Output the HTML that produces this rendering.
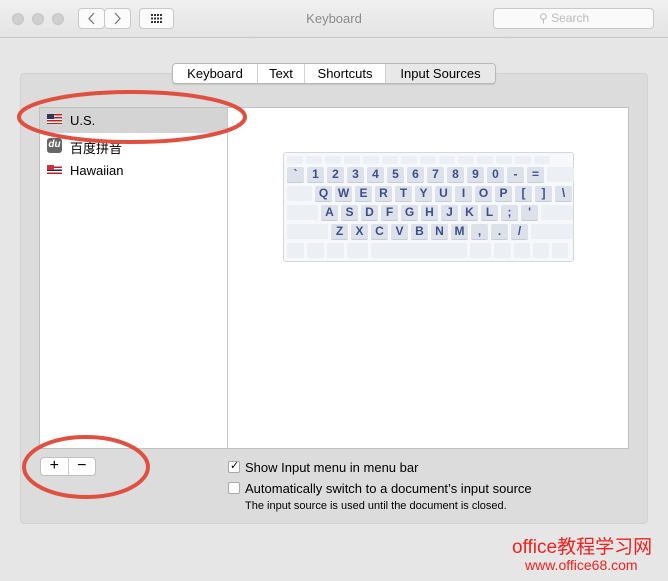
<html><head><style>
body{margin:0;width:668px;height:581px;background:#e6e6e6;font-family:"Liberation Sans",sans-serif;position:relative;overflow:hidden}
.tb{position:absolute;left:0;top:0;width:668px;height:37px;background:linear-gradient(#f0f0f0,#e4e4e4);border-bottom:1px solid #c8c8c8}
.dot{position:absolute;top:13px;width:12px;height:12px;border-radius:50%;background:#d0d0d0;border:1px solid #c4c4c4;box-sizing:border-box}
.btn{position:absolute;top:8px;height:21px;background:#fbfbfb;border:1px solid #c9c9c9;border-radius:4px;box-sizing:border-box}
.grp{position:absolute;left:20px;top:73px;width:628px;height:451px;background:#dcdcdc;border:1px solid #d2d2d2;border-radius:4px;box-sizing:border-box}
.tabs{position:absolute;left:172px;top:63px;width:324px;height:21px;display:flex;border:1px solid #b8b8b8;border-radius:4px;background:#fff;font-size:13px;overflow:hidden;box-shadow:0 1px 1px rgba(0,0,0,.1);box-sizing:border-box}
.tabs div{border-right:1px solid #d0d0d0;line-height:19px;text-align:center;box-sizing:border-box}
.panel{position:absolute;left:39px;top:107px;width:590px;height:342px;background:#fff;border:1px solid #c0c0c0;box-sizing:border-box}
.kb{position:absolute;left:283px;top:152px;width:291px;height:110px;background:#f7f8fb;border:1px solid #d4d7de;border-radius:3px;box-sizing:border-box}
.r{position:absolute;left:3px;display:flex;gap:3px}
.k{height:15px;background:#dde2ea;border-radius:2px;color:#3c4f8c;font-weight:bold;font-size:12px;text-align:center;line-height:15px;width:17px;box-shadow:0 1px 0 #c8ccd6}
.e{background:#eceff4;box-shadow:none;color:transparent}
.t{font-size:13px;position:absolute}
.cb{position:absolute;width:12px;height:12px;border:1px solid #a8a8a8;background:#fff;border-radius:2px;box-sizing:border-box}
</style></head><body>
<div class="tb">
<div class="dot" style="left:12px"></div><div class="dot" style="left:32px"></div><div class="dot" style="left:52px"></div>
<div class="btn" style="left:78px;width:27px"><svg width="25" height="19"><path d="M15 4 L10 9.5 L15 15" fill="none" stroke="#777" stroke-width="1.3"/></svg></div>
<div class="btn" style="left:104px;width:27px"><svg width="25" height="19"><path d="M10 4 L15 9.5 L10 15" fill="none" stroke="#777" stroke-width="1.3"/></svg></div>
<div class="btn" style="left:139px;width:35px"><svg width="33" height="19"><g fill="#333"><rect x="11" y="5" width="2" height="2"/><rect x="14" y="5" width="2" height="2"/><rect x="17" y="5" width="2" height="2"/><rect x="20" y="5" width="2" height="2"/><rect x="11" y="8.5" width="2" height="2"/><rect x="14" y="8.5" width="2" height="2"/><rect x="17" y="8.5" width="2" height="2"/><rect x="20" y="8.5" width="2" height="2"/><rect x="11" y="12" width="2" height="2"/><rect x="14" y="12" width="2" height="2"/><rect x="17" y="12" width="2" height="2"/><rect x="20" y="12" width="2" height="2"/></g></svg></div>
<div style="position:absolute;left:0;width:668px;top:11px;text-align:center;color:#8a8a8a;font-size:13px">Keyboard</div>
<div class="btn" style="left:493px;width:161px;background:#fafafa;color:#bbb;font-size:12px;line-height:19px;padding-left:45px">⚲ Search</div>
</div>
<div class="grp"></div>
<div class="tabs"><div style="width:85px">Keyboard</div><div style="width:47px">Text</div><div style="width:81px">Shortcuts</div><div style="width:109px;background:#e8e8e8;border:none">Input Sources</div></div>
<div class="panel">
<div style="position:absolute;left:0;top:0;width:187px;height:340px;border-right:1px solid #c8c8c8"></div>
<div style="position:absolute;left:0;top:0;width:187px;height:25px;background:#d4d4d4"></div>
<div style="position:absolute;left:7px;top:6px;width:15px;height:10px;background:repeating-linear-gradient(#b22 0 1.5px,#fff 1.5px 3px)"><div style="width:7px;height:5px;background:#335"></div></div>
<div class="t" style="left:30px;top:5px">U.S.</div>
<div style="position:absolute;left:7px;top:30px;width:15px;height:15px;background:#666;border-radius:3px;color:#fff;font-size:10px;font-style:italic;font-weight:bold;text-align:center;line-height:14px">du</div>
<div class="t" style="left:30px;top:30px;font-family:'Liberation Sans','Noto Sans CJK SC',sans-serif">百度拼音</div>
<div style="position:absolute;left:7px;top:57px;width:15px;height:10px;background:repeating-linear-gradient(#fff 0 1.5px,#b22 1.5px 3px,#fff 3px 4.5px,#225 4.5px 6px)"><div style="width:7px;height:5px;background:#c33"></div></div>
<div class="t" style="left:30px;top:55px">Hawaiian</div>
</div>
<div class="kb">
<div class="r" style="top:3px"><div class="k e" style="height:8px;width:16px"></div><div class="k e" style="height:8px;width:16px"></div><div class="k e" style="height:8px;width:16px"></div><div class="k e" style="height:8px;width:16px"></div><div class="k e" style="height:8px;width:16px"></div><div class="k e" style="height:8px;width:16px"></div><div class="k e" style="height:8px;width:16px"></div><div class="k e" style="height:8px;width:16px"></div><div class="k e" style="height:8px;width:16px"></div><div class="k e" style="height:8px;width:16px"></div><div class="k e" style="height:8px;width:16px"></div><div class="k e" style="height:8px;width:16px"></div><div class="k e" style="height:8px;width:16px"></div><div class="k e" style="height:8px;width:16px"></div></div>
<div class="r" style="top:14px"><div class="k">`</div><div class="k">1</div><div class="k">2</div><div class="k">3</div><div class="k">4</div><div class="k">5</div><div class="k">6</div><div class="k">7</div><div class="k">8</div><div class="k">9</div><div class="k">0</div><div class="k">-</div><div class="k">=</div><div class="k e" style="width:27px"></div></div>
<div class="r" style="top:33px"><div class="k e" style="width:25px"></div><div class="k">Q</div><div class="k">W</div><div class="k">E</div><div class="k">R</div><div class="k">T</div><div class="k">Y</div><div class="k">U</div><div class="k">I</div><div class="k">O</div><div class="k">P</div><div class="k">[</div><div class="k">]</div><div class="k">\</div></div>
<div class="r" style="top:52px"><div class="k e" style="width:31px"></div><div class="k">A</div><div class="k">S</div><div class="k">D</div><div class="k">F</div><div class="k">G</div><div class="k">H</div><div class="k">J</div><div class="k">K</div><div class="k">L</div><div class="k">;</div><div class="k">'</div><div class="k e" style="width:32px"></div></div>
<div class="r" style="top:71px"><div class="k e" style="width:41px"></div><div class="k">Z</div><div class="k">X</div><div class="k">C</div><div class="k">V</div><div class="k">B</div><div class="k">N</div><div class="k">M</div><div class="k">,</div><div class="k">.</div><div class="k">/</div><div class="k e" style="width:42px"></div></div>
<div class="r" style="top:90px"><div class="k e"></div><div class="k e"></div><div class="k e"></div><div class="k e" style="width:21px"></div><div class="k e" style="width:96px"></div><div class="k e" style="width:21px"></div><div class="k e"></div><div class="k e" style="width:16px"></div><div class="k e" style="width:16px"></div><div class="k e" style="width:16px"></div></div>
</div>
<div style="position:absolute;left:40px;top:457px;width:56px;height:19px;background:#fff;border:1px solid #c0c0c0;border-radius:4px;box-sizing:border-box;display:flex;font-size:16px;line-height:16px">
<div style="width:27px;text-align:center;border-right:1px solid #ccc">+</div><div style="width:27px;text-align:center">−</div></div>
<div class="cb" style="left:228px;top:461px"><span style="position:absolute;left:1px;top:-3px;font-size:11px">✓</span></div>
<div class="t" style="left:245px;top:460px">Show Input menu in menu bar</div>
<div class="cb" style="left:228px;top:482px"></div>
<div class="t" style="left:245px;top:481px">Automatically switch to a document’s input source</div>
<div class="t" style="left:245px;top:500px;font-size:11px">The input source is used until the document is closed.</div>
<svg width="668" height="581" style="position:absolute;left:0;top:0">
<ellipse cx="132" cy="117" rx="113" ry="25" fill="none" stroke="#e05040" stroke-width="4"/>
<ellipse cx="86" cy="467" rx="62" ry="30" fill="none" stroke="#e05040" stroke-width="4"/>
</svg>
<div style="position:absolute;left:512px;top:532px;color:#f02020;font-size:19px;font-family:'Liberation Sans','Noto Sans CJK SC',sans-serif">office教程学习网</div>
<div style="position:absolute;left:525px;top:557px;color:#f02020;font-size:14px">www.office68.com</div>
</body></html>
